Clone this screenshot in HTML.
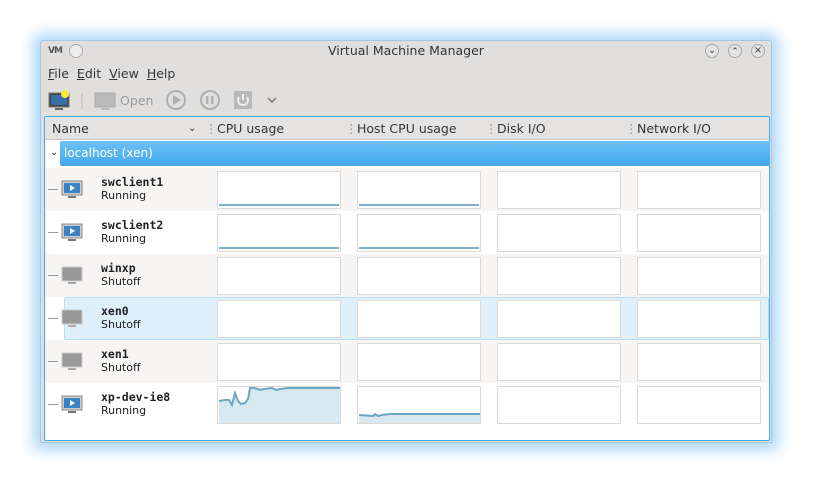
<!DOCTYPE html>
<html><head><meta charset="utf-8"><style>
*{margin:0;padding:0;box-sizing:border-box}
body{width:813px;height:486px;background:#fff;font-family:"DejaVu Sans","Liberation Sans",sans-serif;font-size:12px;color:#31363b;position:relative;overflow:hidden}
.win{position:absolute;left:40px;top:40px;width:732px;height:403px;background:#e0dfde;border:1px solid #9fc9ea;box-shadow:0 0 14px 7px rgba(120,190,245,.6);border-radius:3px 3px 0 0}
.title{position:absolute;left:0;top:0;width:100%;height:22px;text-align:center;line-height:20px;font-size:12.5px;color:#31363b}
.menu{position:absolute;top:25px;left:7px;font-size:12.5px}
.menu span{margin-right:8px}
.menu u{text-decoration:underline}
.tb{position:absolute;top:48px;left:0;height:24px;width:100%}
.frame{position:absolute;left:3px;top:75px;width:726px;height:325px;background:#fff;border:1px solid #3daee9;border-radius:2px}
.hdr{position:absolute;left:0;top:0;width:100%;height:23px;background:#e4e3e2;border-bottom:1px solid #c9c8c7;font-size:12.5px;line-height:23px}
.hdr span{position:absolute}
.host{position:absolute;left:15px;top:24px;width:710px;height:25px;background:linear-gradient(#6ec0f5,#43a8ea);color:#fff;line-height:24px;padding-left:4px;font-size:12px;border-radius:2px}
.row{position:absolute;left:0;width:724px;height:43px}
.nm{position:absolute;left:56px;top:7px;font-family:"DejaVu Sans Mono",monospace;font-weight:bold;font-size:11.5px;color:#222}
.st{position:absolute;left:56px;top:21px;font-size:11px;color:#222}
.g{position:absolute;top:3px;width:124px;height:38px;background:#fff;border:1px solid #dcdbda}
.tick{position:absolute;left:3px;top:21px;width:10px;border-top:1px solid #999}
.ic{position:absolute;left:16px;top:12px}
</style></head><body>
<div class="win">
 <div class="title">Virtual Machine Manager</div>
 <div style="position:absolute;left:7px;top:5px;font-size:9px;font-weight:bold;color:#555;letter-spacing:-1px">VM</div>
 <div style="position:absolute;left:28px;top:3px;width:14px;height:14px;border-radius:50%;background:#eee;border:1px solid #aaa"></div>
 <div style="position:absolute;left:664px;top:3px;width:14px;height:14px;border-radius:50%;background:#e4e4e4;border:1px solid #aaa;font-size:9px;text-align:center;line-height:12px">⌄</div>
 <div style="position:absolute;left:687px;top:3px;width:14px;height:14px;border-radius:50%;background:#e4e4e4;border:1px solid #aaa;font-size:9px;text-align:center;line-height:14px">⌃</div>
 <div style="position:absolute;left:710px;top:3px;width:14px;height:14px;border-radius:50%;background:#e4e4e4;border:1px solid #aaa;font-size:10px;text-align:center;line-height:12px">×</div>
 <div class="menu"><span><u>F</u>ile</span><span><u>E</u>dit</span><span><u>V</u>iew</span><span><u>H</u>elp</span></div>
 <div class="tb">
  <svg width="732" height="24">
   <rect x="8" y="4" width="20" height="14" fill="#444" stroke="#777"/><rect x="10" y="6" width="16" height="10" fill="#3a6fa8"/><rect x="14" y="19" width="8" height="2" fill="#666"/>
   <circle cx="24" cy="5" r="4" fill="#f6e93a"/>
   <line x1="41" y1="4" x2="41" y2="20" stroke="#bbb"/>
   <rect x="54" y="4" width="20" height="14" fill="#bbb" stroke="#aaa"/><rect x="60" y="19" width="8" height="2" fill="#bbb"/>
   <text x="79" y="16" font-size="12.5" fill="#9a9a9a" font-family="DejaVu Sans">Open</text>
   <circle cx="135" cy="11" r="9" fill="none" stroke="#b0b0b0" stroke-width="2"/><path d="M132 6 L140 11 L132 16Z" fill="#b0b0b0"/>
   <circle cx="169" cy="11" r="9" fill="none" stroke="#b0b0b0" stroke-width="2"/><rect x="165" y="7" width="2.5" height="8" fill="#b0b0b0"/><rect x="170" y="7" width="2.5" height="8" fill="#b0b0b0"/>
   <rect x="193" y="2" width="18" height="18" fill="#b8b8b8"/><path d="M198 8 A5 5 0 1 0 206 8" fill="none" stroke="#eee" stroke-width="2"/><line x1="202" y1="5" x2="202" y2="11" stroke="#eee" stroke-width="2"/>
   <path d="M227 9 L231 13 L235 9" fill="none" stroke="#777" stroke-width="1.5"/>
  </svg>
 </div>
 <div class="frame">
  <div class="hdr">
   <span style="left:7px">Name</span><span style="left:143px;font-size:10px">&#x2304;</span>
   <span style="left:160px;color:#999">⋮</span><span style="left:172px">CPU usage</span>
   <span style="left:300px;color:#999">⋮</span><span style="left:312px">Host CPU usage</span>
   <span style="left:440px;color:#999">⋮</span><span style="left:452px">Disk I/O</span>
   <span style="left:580px;color:#999">⋮</span><span style="left:592px">Network I/O</span>
  </div>
  <div style="position:absolute;left:5px;top:30px;font-size:10px">&#x2304;</div>
  <div class="host">localhost (xen)</div>

  <div class="row" style="top:51px;background:#f6f5f4"><div class="tick"></div>
   <svg class="ic" width="22" height="20"><rect x="1" y="1" width="20" height="14" fill="#ccc" stroke="#888"/><rect x="3" y="3" width="16" height="10" fill="#3b82c4"/><path d="M9 5 L14 8 L9 11Z" fill="#fff"/><rect x="7" y="16" width="8" height="2" fill="#777"/></svg>
   <div class="nm">swclient1</div><div class="st">Running</div>
   <div class="g" style="left:172px"><div style="position:absolute;left:1px;right:1px;bottom:2px;border-top:2px solid #7fb0c8"></div></div>
   <div class="g" style="left:312px"><div style="position:absolute;left:1px;right:1px;bottom:2px;border-top:2px solid #7fb0c8"></div></div>
   <div class="g" style="left:452px"></div><div class="g" style="left:592px"></div></div>

  <div class="row" style="top:94px;background:#fff"><div class="tick"></div>
   <svg class="ic" width="22" height="20"><rect x="1" y="1" width="20" height="14" fill="#ccc" stroke="#888"/><rect x="3" y="3" width="16" height="10" fill="#3b82c4"/><path d="M9 5 L14 8 L9 11Z" fill="#fff"/><rect x="7" y="16" width="8" height="2" fill="#777"/></svg>
   <div class="nm">swclient2</div><div class="st">Running</div>
   <div class="g" style="left:172px"><div style="position:absolute;left:1px;right:1px;bottom:2px;border-top:2px solid #7fb0c8"></div></div>
   <div class="g" style="left:312px"><div style="position:absolute;left:1px;right:1px;bottom:2px;border-top:2px solid #7fb0c8"></div></div>
   <div class="g" style="left:452px"></div><div class="g" style="left:592px"></div></div>

  <div class="row" style="top:137px;background:#f6f5f4"><div class="tick"></div>
   <svg class="ic" width="22" height="20"><rect x="1" y="1" width="20" height="14" fill="#999" stroke="#ccc"/><rect x="7" y="16" width="8" height="2" fill="#aaa"/></svg>
   <div class="nm">winxp</div><div class="st">Shutoff</div>
   <div class="g" style="left:172px"></div><div class="g" style="left:312px"></div><div class="g" style="left:452px"></div><div class="g" style="left:592px"></div></div>

  <div class="row" style="top:180px;background:#fff"><div class="tick"></div>
   <div style="position:absolute;left:19px;top:0;width:705px;height:43px;background:#e0f0fb;border:1px solid #b9dff6;border-radius:2px"></div>
   <svg class="ic" width="22" height="20"><rect x="1" y="1" width="20" height="14" fill="#999" stroke="#ccc"/><rect x="7" y="16" width="8" height="2" fill="#aaa"/></svg>
   <div class="nm">xen0</div><div class="st">Shutoff</div>
   <div class="g" style="left:172px"></div><div class="g" style="left:312px"></div><div class="g" style="left:452px"></div><div class="g" style="left:592px"></div></div>

  <div class="row" style="top:223px;background:#f6f5f4"><div class="tick"></div>
   <svg class="ic" width="22" height="20"><rect x="1" y="1" width="20" height="14" fill="#999" stroke="#ccc"/><rect x="7" y="16" width="8" height="2" fill="#aaa"/></svg>
   <div class="nm">xen1</div><div class="st">Shutoff</div>
   <div class="g" style="left:172px"></div><div class="g" style="left:312px"></div><div class="g" style="left:452px"></div><div class="g" style="left:592px"></div></div>

  <div class="row" style="top:266px;background:#fff"><div class="tick"></div>
   <svg class="ic" width="22" height="20"><rect x="1" y="1" width="20" height="14" fill="#ccc" stroke="#888"/><rect x="3" y="3" width="16" height="10" fill="#3b82c4"/><path d="M9 5 L14 8 L9 11Z" fill="#fff"/><rect x="7" y="16" width="8" height="2" fill="#777"/></svg>
   <div class="nm">xp-dev-ie8</div><div class="st">Running</div>
   <div class="g" style="left:172px"><svg width="122" height="36" style="position:absolute;left:0;top:0"><path d="M1 14 L7 13 L11 13 L14 18 L17 6 L20 14 L23 17 L27 16 L30 12 L32 1 L36 1 L40 2 L42 3 L46 2 L54 1 L58 3 L62 2 L70 1 L122 1 L122 36 L1 36Z" fill="#d7e8f0" stroke="none"/><path d="M1 14 L7 13 L11 13 L14 18 L17 6 L20 14 L23 17 L27 16 L30 12 L32 1 L36 1 L40 2 L42 3 L46 2 L54 1 L58 3 L62 2 L70 1 L122 1" fill="none" stroke="#6ba6c2" stroke-width="2"/></svg></div>
   <div class="g" style="left:312px"><svg width="122" height="36" style="position:absolute;left:0;top:0"><path d="M1 28 L15 29 L17 27 L20 29 L24 28 L32 27 L122 27 L122 36 L1 36Z" fill="#d7e8f0"/><path d="M1 28 L15 29 L17 27 L20 29 L24 28 L32 27 L122 27" fill="none" stroke="#6ba6c2" stroke-width="2"/></svg></div>
   <div class="g" style="left:452px"></div><div class="g" style="left:592px"></div></div>
 </div>
</div>
</body></html>
